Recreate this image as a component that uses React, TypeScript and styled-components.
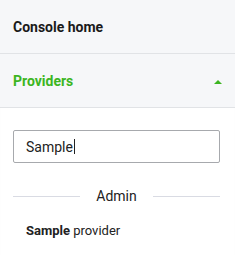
import React from "react";
import styled, { createGlobalStyle } from "styled-components";

const Global = createGlobalStyle`
  html, body { margin: 0; padding: 0; background: #ffffff; }
  body { font-family: Roboto, "Liberation Sans", sans-serif; width: 235px; height: 255px; overflow: hidden; }
`;

const Panel = styled.div`
  display: flex;
  flex-direction: column;
  width: 235px;
  box-shadow: inset 0 2px 2px -1px rgba(0, 0, 0, 0.12);
`;

const NavItem = styled.div<{ $active?: boolean }>`
  display: flex;
  align-items: center;
  justify-content: space-between;
  height: 53px;
  padding: 0 13px;
  background: #f6f7f9;
  border-bottom: 1px solid #e1e3e6;
  font-size: 14px;
  font-weight: 700;
  color: ${(p) => (p.$active ? "#3cb521" : "#1a1a1a")};
`;

const Caret = styled.span`
  width: 0;
  height: 0;
  border-left: 4px solid transparent;
  border-right: 4px solid transparent;
  border-bottom: 4px solid #3cb521;
  margin-top: 2px;
`;

const Body = styled.div`
  display: flex;
  flex-direction: column;
  padding: 22px 15px 0 13px;
`;

const Input = styled.div`
  display: flex;
  align-items: center;
  height: 31px;
  border: 1px solid #a7a9ad;
  border-radius: 2px;
  padding: 0 12px;
  font-size: 14px;
  color: #222;
`;

const Cursor = styled.span`
  display: inline-block;
  width: 1px;
  height: 15px;
  background: #222;
  margin-left: 1px;
`;

const Divider = styled.div`
  display: flex;
  align-items: center;
  gap: 16px;
  margin-top: 25px;
  font-size: 14px;
  color: #222;
  &::before, &::after {
    content: "";
    flex: 1;
    height: 1px;
    background: #d9dbe3;
  }
`;

const Option = styled.div`
  padding: 19px 13px;
  font-size: 13px;
  color: #222;
  b { font-weight: 700; }
`;

export default function App() {
  return (
    <>
      <Global />
      <Panel>
        <NavItem>Console home</NavItem>
        <NavItem $active>
          Providers
          <Caret />
        </NavItem>
        <Body>
          <Input>
            Sample<Cursor />
          </Input>
          <Divider>Admin</Divider>
          <Option>
            <b>Sample</b> provider
          </Option>
        </Body>
      </Panel>
    </>
  );
}
